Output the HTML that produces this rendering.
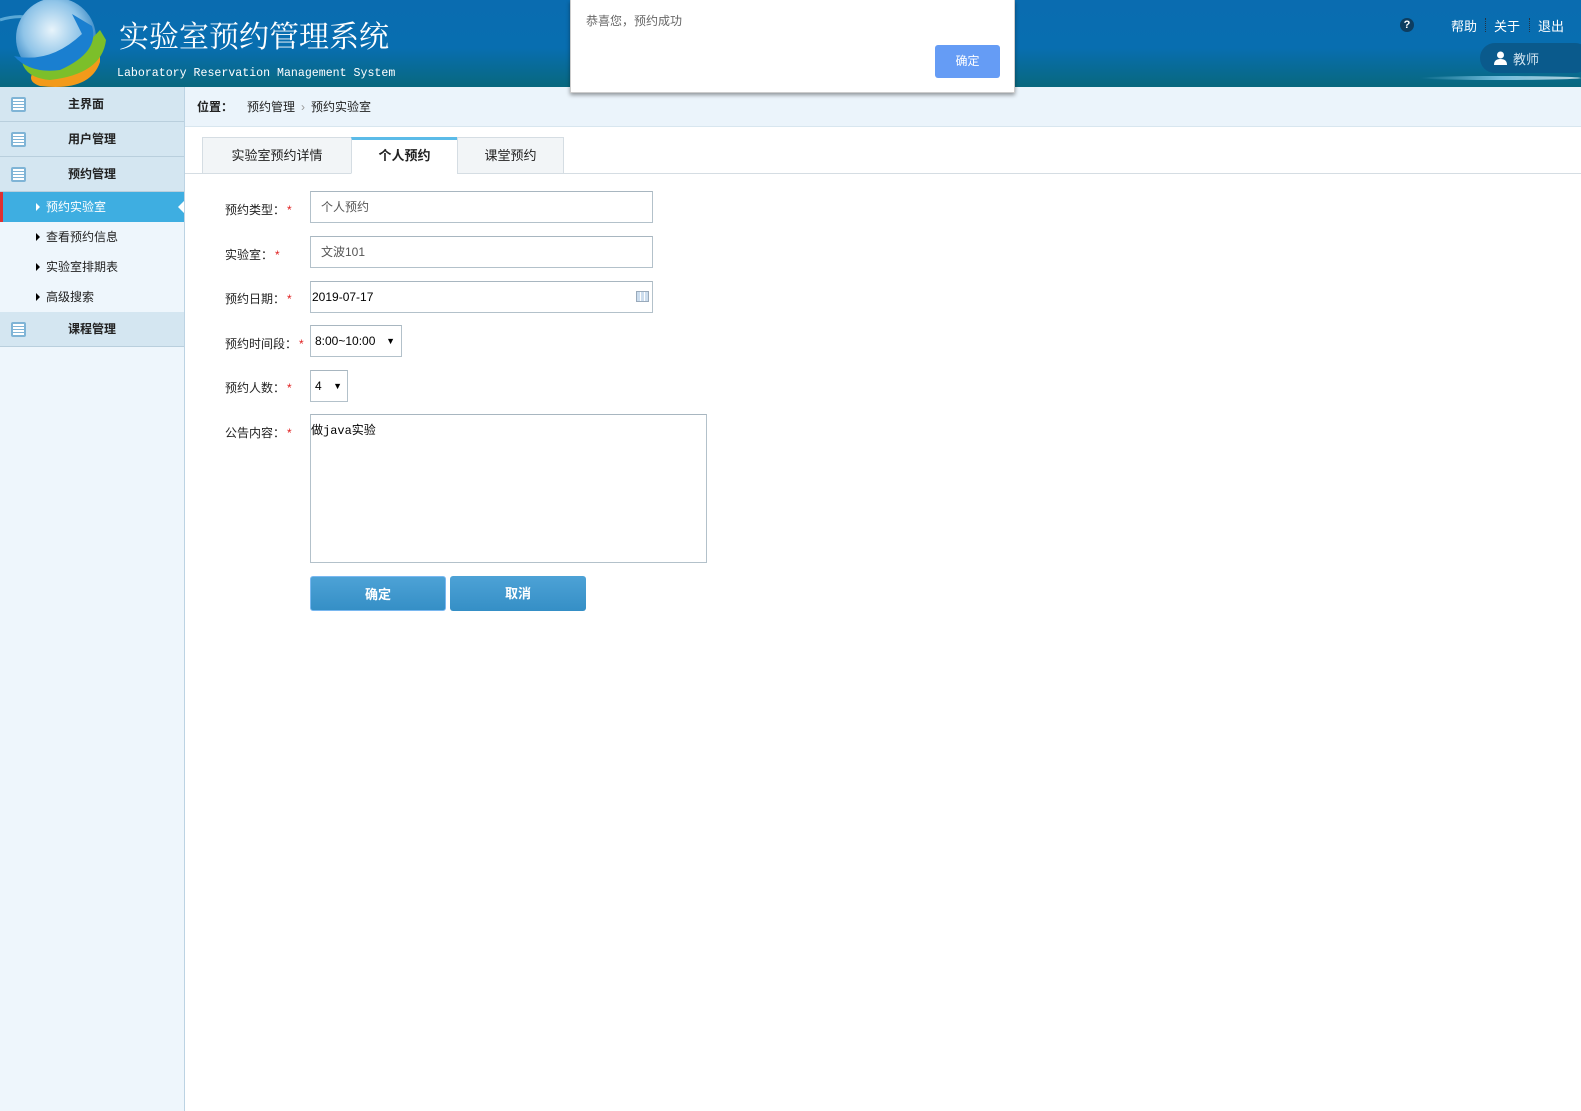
<!DOCTYPE html>
<html><head><meta charset="utf-8"><style>
*{box-sizing:border-box;margin:0;padding:0}
body{width:1581px;height:1111px;overflow:hidden;font-family:"Liberation Sans","Noto Sans CJK SC",sans-serif;font-size:12px;color:#222;background:#fff;position:relative}
.hdr{position:absolute;left:0;top:0;width:1581px;height:87px;background:linear-gradient(#0a6cb0 0%,#086eb0 55%,#08687e 100%)}
.title{position:absolute;left:119px;top:12px;color:#fff;font-size:30px;font-family:"Liberation Serif","Noto Serif CJK SC",serif;letter-spacing:0px}
.sub{position:absolute;left:117px;top:67px;color:#fff;font-size:11.6px;font-family:"Liberation Mono",monospace}
.tr{position:absolute;top:16px;color:#fff;font-size:13px}
.side{position:absolute;left:0;top:87px;width:185px;height:1024px;background:#eef6fc;border-right:1px solid #bcd3e3}
.mh{height:35px;background:#d4e6f1;border-bottom:1px solid #b9cfdd;position:relative;font-weight:bold;font-size:12px;line-height:34px;padding-left:68px}
.mh i{position:absolute;left:11px;top:10px;width:15px;height:15px;border:2px solid #7fb4d6;border-radius:2px;background:repeating-linear-gradient(#fff 0 2px,#7fb4d6 2px 3px);}
.si{height:30px;line-height:30px;padding-left:46px;position:relative;font-size:12px}
.si:before{content:"";position:absolute;left:36px;top:11px;border-left:4px solid #000;border-top:4px solid transparent;border-bottom:4px solid transparent}
.si.act{background:#3eaee1;color:#fff;border-left:3px solid #e03030;padding-left:43px}
.si.act:before{border-left-color:#fff;left:33px}
.si.act:after{content:"";position:absolute;right:0;top:9px;border-right:6px solid #fff;border-top:6px solid transparent;border-bottom:6px solid transparent}
.bc{position:absolute;left:185px;top:87px;width:1396px;height:40px;background:#ebf4fb;border-bottom:1px solid #d8e6ef;line-height:40px;font-size:12px}
.tabs{position:absolute;left:185px;top:137px;width:1396px;height:37px;border-bottom:1px solid #d5dde3}
.tab{position:absolute;top:0;height:37px;border:1px solid #d5dde3;background:#f2f5f7;text-align:center;line-height:36px;font-size:13px}
.tab.a{background:#fff;border-top:3px solid #5bbbe8;border-bottom:1px solid #fff;font-weight:bold;line-height:32px}
.lb{position:absolute;left:225px;font-size:12px}
.lb b{color:#e02020;font-weight:normal;margin-left:2px}
.in{position:absolute;left:310px;border:1px solid #b3c1ca;border-top-color:#a8b6c0;background:#fff;height:32px;line-height:30px;padding-left:10px;color:#555;font-size:12px}
.btn{position:absolute;top:576px;height:35px;width:136px;background:linear-gradient(#4da2d6,#358fc6);border-radius:3px;color:#fff;font-weight:bold;font-size:13px;text-align:center;line-height:35px}
.dlg{position:absolute;left:570px;top:0;width:445px;height:93px;background:#fff;box-shadow:0 2px 4px rgba(0,0,0,.4);border:1px solid #ccc;border-top:none}
</style></head><body>
<div class="hdr">
<svg style="position:absolute;left:0;top:0" width="120" height="87" viewBox="0 0 120 87">
<defs><radialGradient id="g" cx="45%" cy="40%" r="60%"><stop offset="0" stop-color="#e8f4fb"/><stop offset=".6" stop-color="#8fc4e8"/><stop offset="1" stop-color="#2a7fc0"/></radialGradient></defs>
<path d="M0 20 Q30 10 60 30" stroke="#8fd0f0" stroke-width="3" fill="none" opacity=".6"/>
<circle cx="56" cy="38" r="40" fill="url(#g)"/>
<path d="M100 62 Q90 92 40 86 Q28 82 32 74 Q70 82 100 56Z" fill="#f39a1a"/>
<path d="M106 40 Q102 74 50 80 Q26 78 22 62 Q60 74 100 30Z" fill="#7cbf2a"/>
<path d="M72 14 L92 26 Q100 52 60 70 Q30 74 14 56 Q50 64 82 34Z" fill="#1a7fd0"/>
</svg>
<div class="title">实验室预约管理系统</div>
<div class="sub">Laboratory Reservation Management System</div>
<div style="position:absolute;left:1400px;top:18px;width:14px;height:14px;border-radius:50%;background:#0d3d60;color:#fff;font-size:11px;font-weight:bold;text-align:center;line-height:14px">?</div>
<div class="tr" style="left:1451px">帮助</div>
<div style="position:absolute;left:1485px;top:18px;height:14px;border-left:1px dotted #234"></div>
<div class="tr" style="left:1494px">关于</div>
<div style="position:absolute;left:1529px;top:18px;height:14px;border-left:1px dotted #234"></div>
<div class="tr" style="left:1538px">退出</div>
<div style="position:absolute;left:1480px;top:43px;width:110px;height:30px;border-radius:15px;background:#0a5a8c"></div>
<svg style="position:absolute;left:1494px;top:51px" width="13" height="14"><circle cx="6.5" cy="4" r="3.5" fill="#fff"/><path d="M0 14 Q0 8 6.5 8 Q13 8 13 14Z" fill="#fff"/></svg>
<div style="position:absolute;left:1513px;top:49px;color:#cfe3ef;font-size:13px">教师</div>
<div style="position:absolute;left:1420px;top:76px;width:161px;height:4px;background:linear-gradient(90deg,transparent,#9fe0ff,#fff);border-radius:50%;opacity:.7"></div>
</div>
<div class="side">
<div class="mh"><i></i>主界面</div>
<div class="mh"><i></i>用户管理</div>
<div class="mh"><i></i>预约管理</div>
<div class="si act">预约实验室</div>
<div class="si">查看预约信息</div>
<div class="si">实验室排期表</div>
<div class="si">高级搜索</div>
<div class="mh"><i></i>课程管理</div>
</div>
<div class="bc"><b style="margin-left:12px">位置：</b><span style="margin-left:14px">预约管理</span><span style="color:#999;margin:0 6px">›</span>预约实验室</div>
<div class="tabs">
<div class="tab" style="left:17px;width:150px">实验室预约详情</div>
<div class="tab a" style="left:166px;width:107px">个人预约</div>
<div class="tab" style="left:272px;width:107px">课堂预约</div>
</div>
<div class="lb" style="top:201px">预约类型：<b>*</b></div>
<div class="in" style="top:191px;width:343px">个人预约</div>
<div class="lb" style="top:246px">实验室：<b>*</b></div>
<div class="in" style="top:236px;width:343px">文波101</div>
<div class="lb" style="top:290px">预约日期：<b>*</b></div>
<div class="in" style="top:281px;width:343px;padding-left:1px;color:#000">2019-07-17
<div style="position:absolute;right:3px;top:9px;width:13px;height:11px;border:1px solid #9ab;background:repeating-linear-gradient(90deg,#cde 0 3px,#fff 3px 4px)"></div></div>
<div class="lb" style="top:335px">预约时间段：<b>*</b></div>
<div class="in" style="top:325px;width:92px;padding-left:4px;color:#000">8:00~10:00<span style="position:absolute;right:6px;font-size:9px">▼</span></div>
<div class="lb" style="top:379px">预约人数：<b>*</b></div>
<div class="in" style="top:370px;width:38px;padding-left:4px;color:#000">4<span style="position:absolute;right:5px;font-size:9px">▼</span></div>
<div class="lb" style="top:424px">公告内容：<b>*</b></div>
<div class="in" style="top:414px;width:397px;height:149px;padding:6px 0 0 0;line-height:20px;color:#000;font-family:'Liberation Mono','Noto Sans CJK SC',monospace;font-size:12px">做java实验</div>
<div class="btn" style="left:310px;border:1px solid #7ab8f0">确定</div>
<div class="btn" style="left:450px">取消</div>
<div class="dlg">
<div style="position:absolute;left:15px;top:12px;color:#666;font-size:12px">恭喜您，预约成功</div>
<div style="position:absolute;left:364px;top:45px;width:65px;height:33px;background:#659cf5;border-radius:3px;color:#fff;text-align:center;line-height:33px;font-size:12px">确定</div>
</div>
</body></html>
